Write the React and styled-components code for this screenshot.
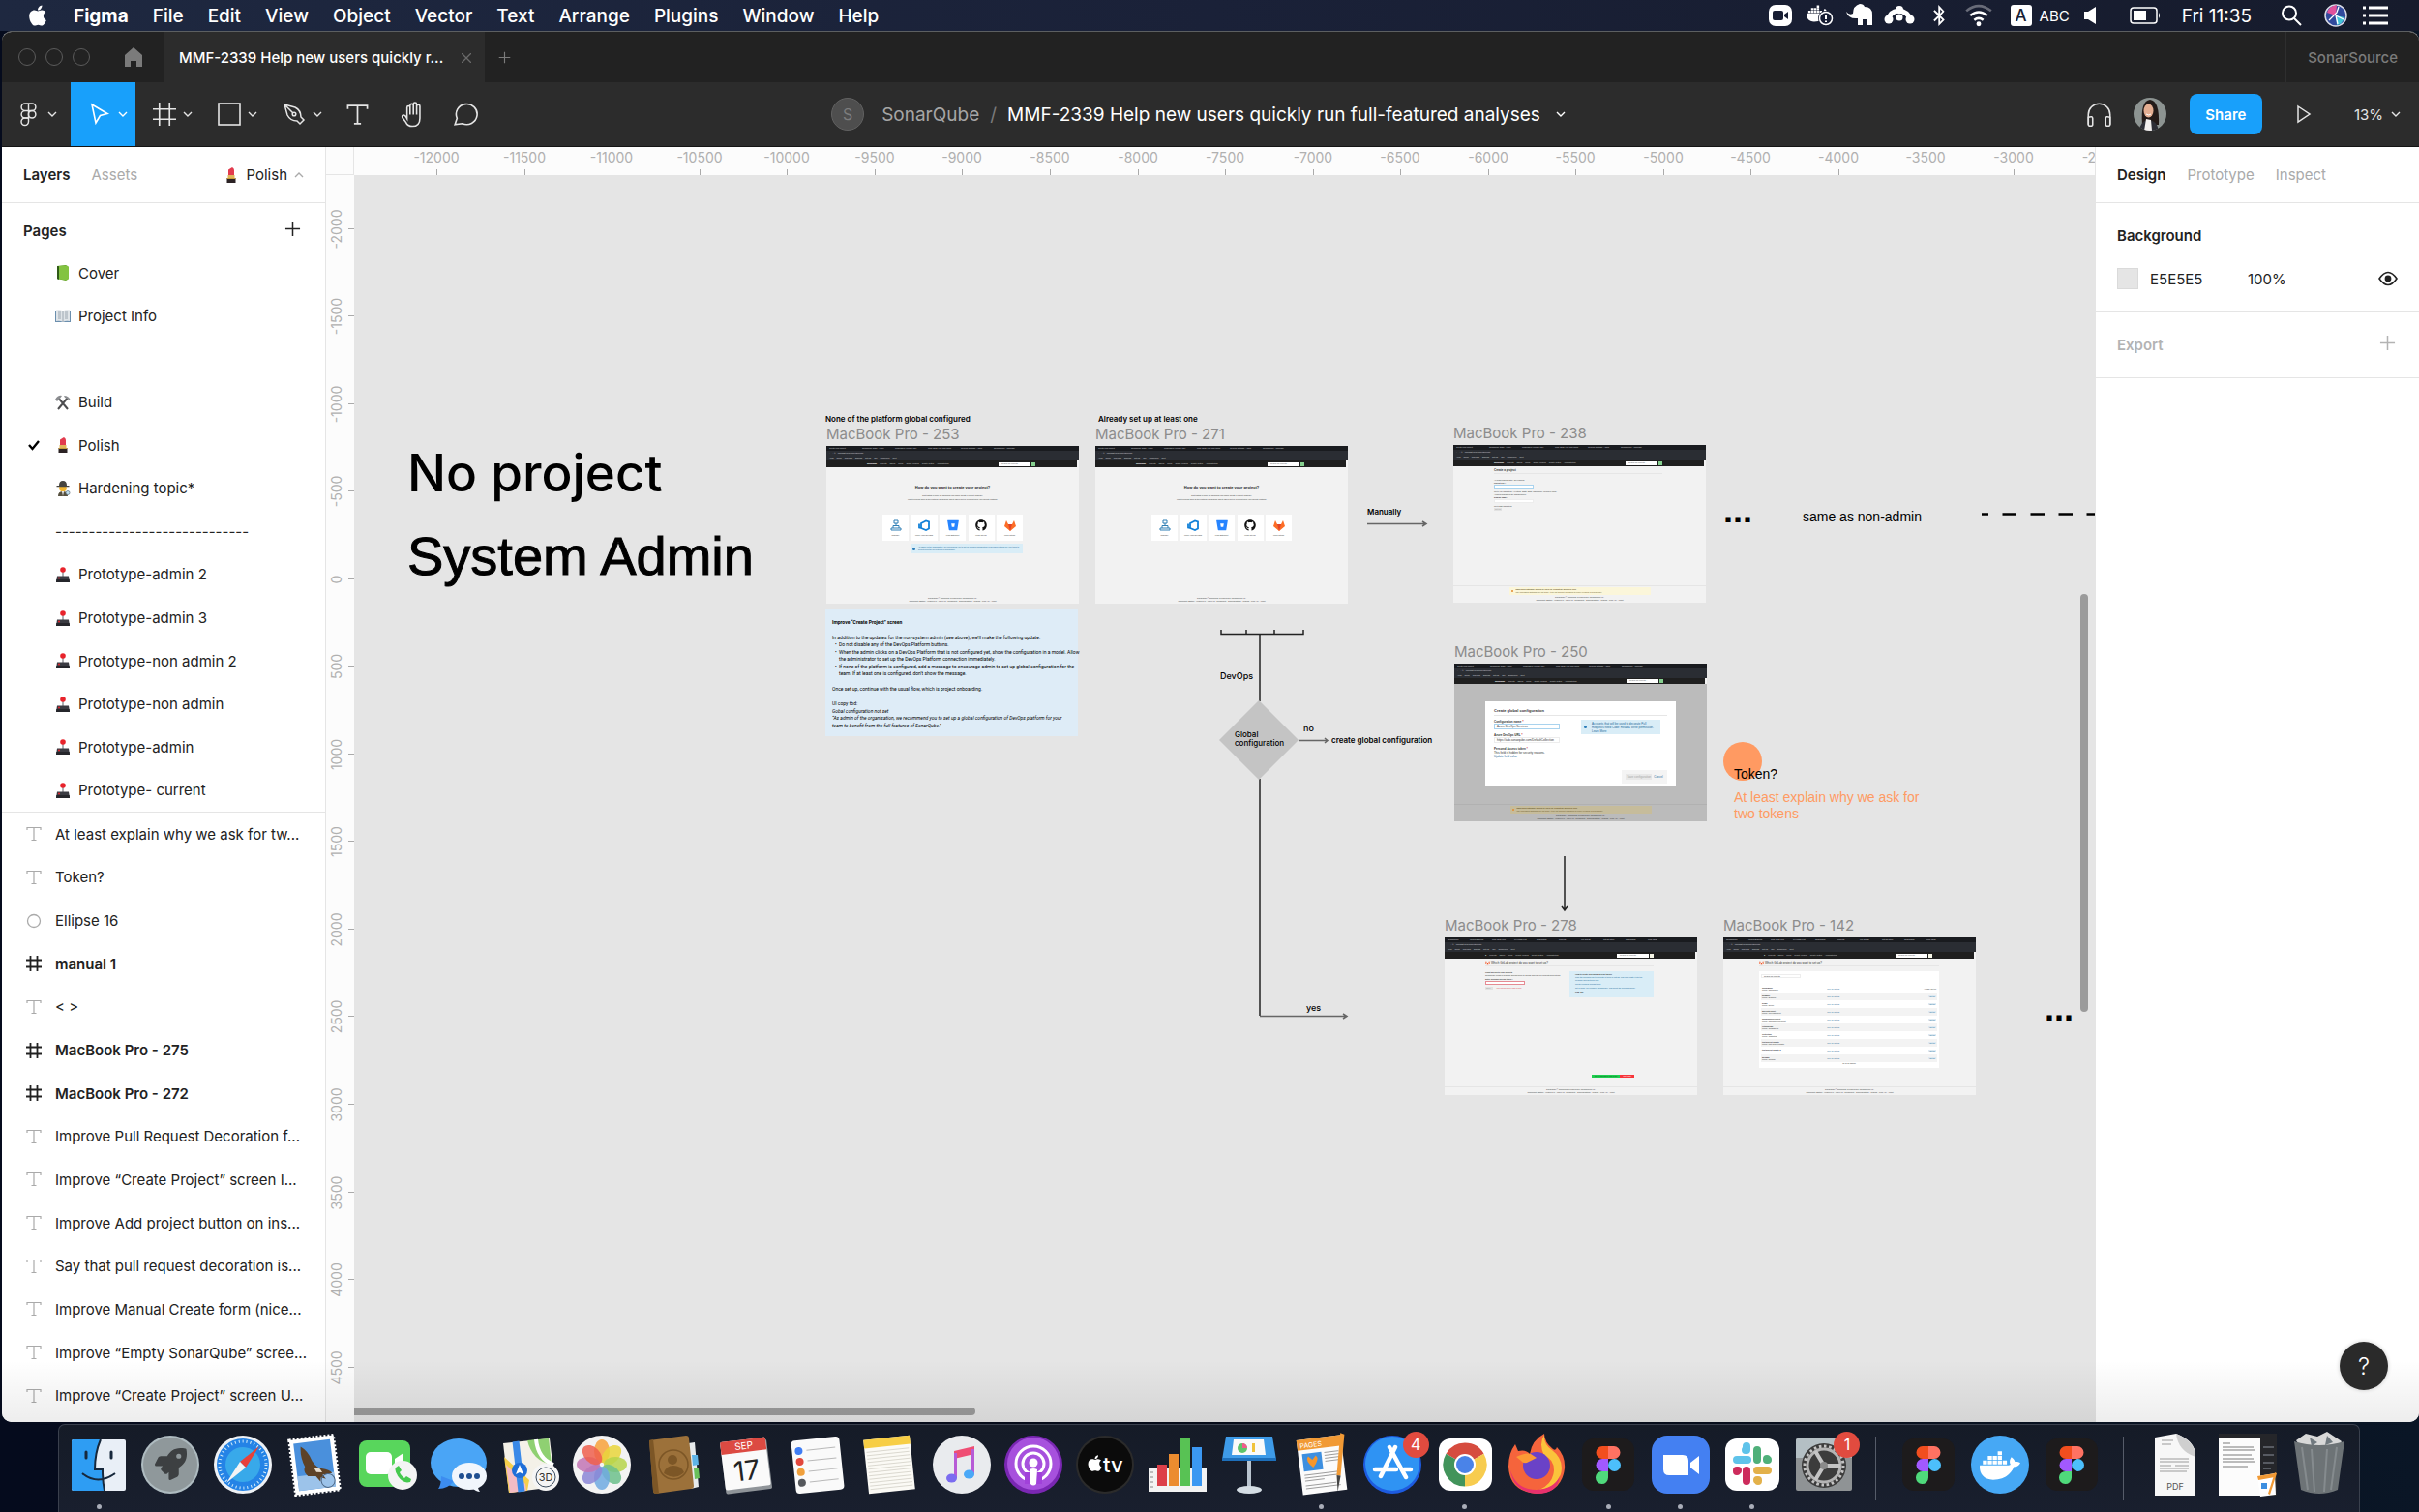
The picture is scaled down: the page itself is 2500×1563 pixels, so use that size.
import React from "react";
import styled, { createGlobalStyle, css } from "styled-components";
import { FaApple, FaBluetoothB, FaDocker, FaRocket, FaGithub, FaGitlab, FaBitbucket } from "react-icons/fa";

const GlobalStyle = createGlobalStyle`
    * { box-sizing: border-box; }
    body { margin: 0; background: #060b1b; }
    button, input { font: inherit; color: inherit; background: none; border: 0; padding: 0; margin: 0; }
    ul { list-style: none; margin: 0; padding: 0; }
    h2, h3, p { margin: 0; font-size: inherit; font-weight: inherit; }
`;

// pixels on screen for one canvas unit at the current zoom
const UNIT = 0.1811;
const ORIGIN_X = -12470;
const ORIGIN_Y = -2301;

const menus = ["File", "Edit", "View", "Object", "Vector", "Text", "Arrange", "Plugins", "Window", "Help"];

const pages = [
    { icon: "cover", name: "Cover" },
    { icon: "info", name: "Project Info" },
    { name: "" },
    { icon: "build", name: "Build" },
    { icon: "polish", name: "Polish", current: true },
    { icon: "detective", name: "Hardening topic*" },
    { name: "-----------------------------" },
    { icon: "joystick", name: "Prototype-admin 2" },
    { icon: "joystick", name: "Prototype-admin 3" },
    { icon: "joystick", name: "Prototype-non admin 2" },
    { icon: "joystick", name: "Prototype-non admin" },
    { icon: "joystick", name: "Prototype-admin" },
    { icon: "joystick", name: "Prototype- current" },
];

const layers = [
    { type: "text", name: "At least explain why we ask for tw..." },
    { type: "text", name: "Token?" },
    { type: "ellipse", name: "Ellipse 16" },
    { type: "frame", name: "manual 1" },
    { type: "text", name: "< >" },
    { type: "frame", name: "MacBook Pro - 275" },
    { type: "frame", name: "MacBook Pro - 272" },
    { type: "text", name: "Improve Pull Request Decoration f..." },
    { type: "text", name: "Improve “Create Project” screen I..." },
    { type: "text", name: "Improve Add project button on ins..." },
    { type: "text", name: "Say that pull request decoration is..." },
    { type: "text", name: "Improve Manual Create form (nice..." },
    { type: "text", name: "Improve “Empty SonarQube” scree..." },
    { type: "text", name: "Improve “Create Project” screen U..." },
];

/* ---------- small icons ---------- */

const Line = ({ size = 24, box = 24, width = 1.5, children }) => (
    <svg width={size} height={size} viewBox={`0 0 ${box} ${box}`} fill="none" stroke="currentColor" strokeWidth={width} aria-hidden="true">
        {children}
    </svg>
);

const Chevron = ({ up }) => (
    <Line size={10} box={10} width={1.4}>
        <path d={up ? "M1 7l4-4 4 4" : "M1 3l4 4 4-4"} />
    </Line>
);

const Plus = ({ size = 18 }) => (
    <Line size={size} box={18} width={1.6}>
        <path d="M9 1v16M1 9h16" />
    </Line>
);

const TextGlyph = ({ size = 16 }) => (
    <Line size={size} box={16} width={1.2}>
        <path d="M1 4V1.500h14V4M8 1.500v13M5.500 14.500h5" />
    </Line>
);

const FrameGlyph = ({ size = 16, width = 1.8 }) => (
    <Line size={size} box={16} width={width}>
        <path d="M4.500 0v16M11.500 0v16M0 4.500h16M0 11.500h16" />
    </Line>
);

const layerIcons = {
    text: <TextGlyph />,
    frame: <FrameGlyph />,
    ellipse: (
        <Line size={16} box={16} width={1.3}>
            <circle cx="8" cy="8" r="6.500" />
        </Line>
    ),
};

const pageIcons = {
    cover: (
        <>
            <path d="M2 1l9-1 3 2v12l-3 2-9-2z" fill="#5d9c22" />
            <path d="M4 1l8-.500 2 1.500v12l-2 1.500-8-1z" fill="#83c341" />
            <path d="M2 1l2 .300V15l-2-.800z" fill="#2f5a17" />
        </>
    ),
    info: (
        <>
            <path d="M0 2h16v12H0z" fill="#6b8fae" />
            <path d="M1 1.500q4-1 7 1 3-2 7-1V13q-4-1-7 1-3-2-7-1z" fill="#dfe4e8" />
            <path d="M8 2.500V14M3 4h3M3 6h3M3 8h3M3 10h3M10 4h3M10 6h3M10 8h3M10 10h3" stroke="#8c98a3" strokeWidth=".8" />
        </>
    ),
    build: (
        <>
            <path d="M3 3l10 12M13 3L3 15" stroke="#4e4e50" strokeWidth="2" />
            <path d="M0 5q3-5 7-4L4.500 4.500 2 7zM9 1q5 0 7 5l-2-1-4-2z" fill="#8b8d90" />
        </>
    ),
    polish: (
        <>
            <path d="M5 8V2.500L9 0q2 1 2 3v5z" fill="#e23b4e" />
            <path d="M4.500 8h7v3h-7z" fill="#e0b65a" />
            <path d="M3.500 11h9v5h-9z" fill="#2b2224" />
            <path d="M3.500 11h9v1h-9z" fill="#c89b3c" />
        </>
    ),
    detective: (
        <>
            <path d="M3 16q0-5 5-5t5 5z" fill="#56503f" />
            <circle cx="8" cy="7.500" r="3.800" fill="#f2b632" />
            <path d="M1.500 5h13v1.300h-13zM4 5q0-5 4-5t4 5z" fill="#46443f" />
            <path d="M7 11h2l-1 5z" fill="#f3f3f3" />
            <circle cx="13" cy="12.500" r="2" fill="#bfe0f2" stroke="#6b7a84" strokeWidth=".8" />
        </>
    ),
    joystick: (
        <>
            <path d="M7.300 4h1.400v6H7.300z" fill="#8d8f94" />
            <circle cx="8" cy="3" r="2.800" fill="#e8232b" />
            <path d="M2 9.500h12l1 6.500H1z" fill="#3a3b42" />
            <path d="M1.300 13h13.400l.300 3H1z" fill="#25262b" />
            <circle cx="4" cy="11.500" r="1" fill="#e8232b" />
        </>
    ),
};

const PageIcon = ({ name }) => (
    <svg width="16" height="16" viewBox="0 0 16 16" aria-hidden="true">
        {pageIcons[name]}
    </svg>
);

/* ---------- dock icons ---------- */

const FigmaMark = () => (
    <>
        <rect x="3" y="3" width="54" height="54" rx="12" fill="#1d1b1c" />
        <path d="M30 11h-6a6.500 6.500 0 0 0 0 13h6z" fill="#f24e1e" />
        <path d="M30 11h6a6.500 6.500 0 0 1 0 13h-6z" fill="#ff7262" />
        <path d="M30 24h-6a6.500 6.500 0 0 0 0 13h6z" fill="#a259ff" />
        <circle cx="36.500" cy="30.500" r="6.500" fill="#4cbffb" />
        <path d="M30 37h-6a6.500 6.500 0 1 0 6 6.500z" fill="#4fd97b" />
    </>
);

const times = (n, fn) => Array.from({ length: n }, (_, i) => fn(i));

const dockIcons = {
    finder: (
        <>
            <rect x="2" y="4" width="56" height="53" rx="2" fill="#e9eff7" />
            <path d="M32 4H4q-2 0-2 2v49q0 2 2 2h32q-2-9-2-21h-8q0-20 6-32z" fill="#2e9df3" />
            <path d="M17 17v6M43 17v6" stroke="#17283c" strokeWidth="3" strokeLinecap="round" />
            <path d="M13 39q16 13 34 0M32 4q-6 14-6 31h8q0 13 2 22" fill="none" stroke="#17283c" strokeWidth="2" />
        </>
    ),
    launchpad: (
        <>
            <circle cx="30" cy="30" r="30" fill="#aebbc0" />
            <circle cx="30" cy="30" r="28" fill="#8f989b" />
            <FaRocket x="14" y="13" size={33} color="#3d4042" />
        </>
    ),
    safari: (
        <>
            <circle cx="30" cy="30" r="30" fill="#eef1f4" />
            <circle cx="30" cy="30" r="27" fill="#2483e6" />
            <circle cx="30" cy="30" r="18" fill="#38a9ea" />
            <circle cx="30" cy="30" r="24" fill="none" stroke="#d3ecfb" strokeWidth="3" strokeDasharray="1 3" />
            <path d="M47 11L27 27l6 6z" fill="#e8403a" />
            <path d="M13 49l14-22 6 6z" fill="#f4f4f4" />
        </>
    ),
    mail: (
        <g transform="rotate(-7 30 30)">
            <rect x="7" y="2" width="46" height="57" fill="#fff" stroke="#fff" strokeWidth="3" strokeDasharray="2 2" />
            <rect x="11" y="6" width="38" height="49" fill="#4a90dc" />
            <path d="M11 40h38v15H11z" fill="#9cc3ea" />
            <path d="M18 10q7 5 10 16 4 8 9 9 8 2 10 6-5 1-10 0l3 5-5-2-1 4-4-6-8-1q-5-5-2-10-4-10-2-21z" fill="#5d4227" />
            <path d="M29 33l6 2 2 4-6-1z" fill="#e8ded0" />
            <circle cx="42" cy="48" r="7" fill="none" stroke="#4c6684" />
        </g>
    ),
    facetime: (
        <>
            <rect x="2" y="5" width="53" height="48" rx="8" fill="#58d65c" />
            <rect x="9" y="17" width="27" height="23" rx="5" fill="#fff" />
            <path d="M39 24l9-6v14l-9 5z" fill="#fff" />
            <circle cx="47" cy="41" r="15" fill="#f4f4f4" />
            <path d="M40 33q-2 3 3 10t12 5l1-3-5-3-2 2q-4-3-5-6l2-2-3-5z" fill="#45c94d" />
        </>
    ),
    messages: (
        <>
            <ellipse cx="30" cy="28" rx="29" ry="25" fill="#4aa5f6" />
            <path d="M12 42q0 9-3 13 10 0 16-8z" fill="#3c8cf0" />
            <ellipse cx="41" cy="42" rx="18" ry="14" fill="#f1f6fc" />
            <path d="M44 54q4 4 8 4-3-4-2-8z" fill="#f1f6fc" />
            <circle cx="33" cy="42" r="3" fill="#1f4f91" />
            <circle cx="41" cy="42" r="3" fill="#1f4f91" />
            <circle cx="49" cy="42" r="3" fill="#1f4f91" />
        </>
    ),
    maps: (
        <>
            <path d="M2 8l48-5 6 50-48 6z" fill="#f4f1e8" />
            <path d="M27 5l22-2 3 27q-20-4-25-25z" fill="#8fd072" />
            <path d="M3 22l26 24-2 11-19 2z" fill="#f6cf4a" />
            <path d="M5 30l20 20 1 7-17 2z" fill="#f4bcc5" />
            <path d="M15 6l6 52" stroke="#3a8ae8" strokeWidth="7" />
            <path d="M36 4q2 20 18 26" fill="none" stroke="#fff" strokeWidth="4" />
            <circle cx="19" cy="36" r="8" fill="#1f6fd8" />
            <path d="M19 30l4 10-4-2-4 2z" fill="#fff" />
            <circle cx="46" cy="43" r="14" fill="#f5f5f5" />
            <circle cx="46" cy="43" r="10" fill="none" stroke="#3a4a5c" />
            <text x="46" y="47" textAnchor="middle" fontFamily="Inter, sans-serif" fontSize="11" fill="#333">3D</text>
        </>
    ),
    photos: (
        <>
            <circle cx="30" cy="30" r="30" fill="#f3f3f3" />
            {["#f7a13b", "#e9d53b", "#b6d34a", "#6cc08b", "#6fa9e0", "#8b86d6", "#c274b4", "#ee5f4c"].map((c, i) => (
                <ellipse key={c} cx="30" cy="16" rx="8" ry="12" fill={c} opacity=".85" transform={`rotate(${i * 45} 30 30)`} />
            ))}
        </>
    ),
    contacts: (
        <>
            <path d="M44 8l7-1 4 46-8 2z" fill="#e7eaec" />
            <path d="M48 20l6 0 1 10-6 1z" fill="#5fb4e8" />
            <path d="M50 34l5 0 1 10-5 1z" fill="#69c05a" />
            <path d="M4 5L42 0q3 0 3 3l5 49q0 3-3 3l-36 5q-3 0-3-3z" fill="#9c713a" />
            <path d="M4 5l4-1 6 56-3 0q-3 0-3-3z" fill="#7c5626" />
            <circle cx="29" cy="30" r="15" fill="none" stroke="#7c5626" strokeWidth="1.500" />
            <circle cx="28" cy="25" r="5" fill="#7c5626" />
            <path d="M19 39q2-8 10-8t11 7q-9 9-21 1z" fill="#7c5626" />
        </>
    ),
    calendar: (
        <g transform="rotate(-7 30 30)">
            <rect x="6" y="6" width="48" height="52" rx="2" fill="#8f9499" />
            <rect x="6" y="4" width="47" height="50" rx="2" fill="#fafafa" />
            <path d="M8 4h43q2 0 2 2v11H6V6q0-2 2-2z" fill="#dc4a42" />
            <text x="30" y="14" textAnchor="middle" fontFamily="Inter, sans-serif" fontSize="10" fill="#fff">SEP</text>
            <text x="30" y="46" textAnchor="middle" fontFamily="Inter, sans-serif" fontSize="28" fill="#222">17</text>
        </g>
    ),
    reminders: (
        <g transform="rotate(-6 30 30)">
            <rect x="5" y="3" width="50" height="55" rx="4" fill="#fafafa" />
            {["#3f7df4", "#e2473c", "#f0a03c", "#55585c"].map((c, i) => (
                <g key={c}>
                    <circle cx="12" cy={14 + i * 11} r="4" fill={c} />
                    <path d={`M20 ${14 + i * 11}h30`} stroke="#b9b9b9" />
                </g>
            ))}
        </g>
    ),
    notes: (
        <g transform="rotate(-6 30 30)">
            <rect x="6" y="2" width="48" height="56" fill="#fbfaf5" />
            <rect x="6" y="2" width="48" height="9" fill="#f7ce45" />
            {times(12, (i) => (
                <path key={i} d={`M8 ${15 + i * 3.5}h44`} stroke="#d4d2c8" strokeWidth=".8" />
            ))}
        </g>
    ),
    music: (
        <>
            <circle cx="30" cy="30" r="30" fill="#e9ebee" />
            <path d="M22 16l21-5v8l-21 5z" fill="#ef4e74" />
            <path d="M23.500 18v26M41.500 14v26" stroke="#b75bd6" strokeWidth="3" />
            <ellipse cx="19.500" cy="44" rx="5.500" ry="4.500" fill="#7b6cf0" />
            <ellipse cx="37.500" cy="40" rx="5.500" ry="4.500" fill="#4aa8f7" />
        </>
    ),
    podcasts: (
        <>
            <circle cx="30" cy="30" r="30" fill="#7a27b3" />
            <circle cx="30" cy="29" r="27" fill="#a751dd" />
            <circle cx="30" cy="29" r="18" fill="none" stroke="#fff" strokeWidth="3" />
            <circle cx="30" cy="29" r="11" fill="none" stroke="#fff" strokeWidth="3" />
            <path d="M21 38h18v12H21z" fill="#a141da" />
            <circle cx="30" cy="28" r="4.500" fill="#fff" />
            <path d="M26 35q4-2 8 0l-1 15q-3 3-6 0z" fill="#fff" />
        </>
    ),
    tv: (
        <>
            <circle cx="30" cy="30" r="30" fill="#2b2b2b" />
            <circle cx="30" cy="30" r="28" fill="#0b0b0b" />
            <FaApple x="10" y="19" size={19} color="#fff" />
            <text x="28" y="38" fontFamily="Inter, sans-serif" fontSize="22" fontWeight="500" fill="#fff">tv</text>
        </>
    ),
    numbers: (
        <>
            <path d="M0 34h60v24H0z" fill="#f3f3f3" />
            <path d="M9 30h10v22H9z" fill="#dd3f49" />
            <path d="M21 19h10v33H21z" fill="#ec8c2f" />
            <path d="M33 3h10v49H33z" fill="#58c254" />
            <path d="M45 12h10v40H45z" fill="#3b98f2" />
            <path d="M2 38h3M2 43h3M2 48h3M2 53h3" stroke="#888" />
        </>
    ),
    keynote: (
        <>
            <path d="M28 26h4v30h-4z" fill="#b9c4cf" />
            <ellipse cx="30" cy="56" rx="13" ry="4" fill="#d4dde4" />
            <path d="M6 1h48l4 24H2z" fill="#3e9be8" />
            <path d="M2 23h56v3H2z" fill="#1d6fbb" />
            <path d="M14 4h31l2 16H12z" fill="#fafafa" />
            <circle cx="23" cy="13" r="5" fill="#5fc36a" />
            <path d="M23 8a5 5 0 0 1 5 5h-5z" fill="#f35b8b" />
            <path d="M33 8h3v9h-3z" fill="#f0c33c" />
        </>
    ),
    pages: (
        <g transform="rotate(-7 30 30)">
            <rect x="8" y="2" width="46" height="57" fill="#fbfbfb" />
            <rect x="8" y="2" width="46" height="11" fill="#f19a35" />
            <text x="11" y="11" fontFamily="Inter, sans-serif" fontSize="7" fill="#fff">PAGES</text>
            <rect x="12" y="17" width="20" height="18" fill="#3d8fe0" />
            <path d="M22 32q-8-8-4-12l4 4 4-4q4 4-4 12z" fill="#f7962c" />
            <path d="M35 18h15M35 21h15M35 24h15M35 27h15M12 39h36M12 42h36M12 45h20M12 50h32M12 53h36" stroke="#8a8a8a" strokeWidth=".8" />
            <path d="M54 0l4 2-9 42-4-1z" fill="#f19a35" />
            <path d="M45 43l4 1-5 16z" fill="#444" />
        </g>
    ),
    appstore: (
        <>
            <circle cx="30" cy="30" r="30" fill="#1d5be0" />
            <circle cx="30" cy="29" r="28" fill="#2f93f3" />
            <path d="M33 12L18 42M27 12l17 31M12 35h22M42 35h7" stroke="#fff" strokeWidth="4.500" strokeLinecap="round" />
        </>
    ),
    chrome: (
        <>
            <rect x="3" y="3" width="55" height="54" rx="12" fill="#fff" />
            <path d="M30 30L10.500 18.700a22.500 22.500 0 0 1 39 0z" fill="#d64c3f" />
            <path d="M30 30v22.500A22.500 22.500 0 0 1 10.500 18.700z" fill="#42945b" />
            <path d="M30 30l19.500-11.300A22.500 22.500 0 0 1 30 52.500z" fill="#f7cc4f" />
            <circle cx="30" cy="30" r="11" fill="#fff" />
            <circle cx="30" cy="30" r="9" fill="#4a83e8" />
        </>
    ),
    firefox: (
        <>
            <path d="M30 60Q2 58 1 32 1 18 8 9l3 7q8-2 12 3 2-14 15-21 0 9 9 16 3 2 4-2 9 9 8 22-3 25-29 26z" fill="#f5643c" />
            <path d="M38-1q-1 10 8 16 13 10 9 25-6 15-22 16 14-6 15-20 0-12-10-15-6-12 0-22z" fill="#fbc33b" />
            <circle cx="30" cy="31" r="14" fill="#6a42c7" />
            <path d="M9 22q10-5 15-3l6 4-8 4q-5 3-8-1z" fill="#fb9a35" />
            <path d="M3 36q6 20 27 20 18-1 24-14-2 18-24 18Q6 58 3 36z" fill="#e8316e" />
        </>
    ),
    figma: <FigmaMark />,
    zoom: (
        <>
            <rect width="60" height="60" rx="16" fill="#4480f2" />
            <path d="M12 20h20q6 0 6 6v15H18q-6 0-6-6z" fill="#fff" />
            <path d="M40 28l9-7v19l-9-7z" fill="#fff" />
        </>
    ),
    slack: (
        <>
            <rect x="2" y="3" width="56" height="54" rx="12" fill="#fff" />
            <path d="M24 15v-4M24 15h-1M14 25h11" stroke="#5fc3ea" strokeWidth="8" strokeLinecap="round" />
            <path d="M35 15v10M46 25h-1M45 25v-1" stroke="#4fb07a" strokeWidth="8" strokeLinecap="round" />
            <path d="M35 36h11M35 46h1M36 47v-1" stroke="#e3b14a" strokeWidth="8" strokeLinecap="round" />
            <path d="M24 36v11M14 36h1M14 36v1" stroke="#cd2b5c" strokeWidth="8" strokeLinecap="round" />
        </>
    ),
    settings: (
        <>
            <rect x="1" y="3" width="58" height="54" rx="2" fill="#8f9395" />
            <path d="M1 5q0-2 2-2h54q2 0 2 2v18H1z" fill="#b4bfc4" />
            <circle cx="30" cy="31" r="23" fill="#3c3c3c" />
            <circle cx="30" cy="31" r="20" fill="none" stroke="#c4c4c4" strokeWidth="3" strokeDasharray="2.600 2.600" />
            <circle cx="30" cy="31" r="17" fill="none" stroke="#b4b4b4" strokeWidth="3" />
            <path d="M30 31h17M30 31L21 16M30 31l-9 15" stroke="#c4c4c4" strokeWidth="4" />
            <circle cx="30" cy="31" r="4" fill="#8a8a8a" />
        </>
    ),
    docker: (
        <>
            <circle cx="30" cy="30" r="30" fill="#46a8f5" />
            <FaDocker x="9" y="10" size={42} color="#fff" />
        </>
    ),
    pdf: (
        <>
            <path d="M9 2l22-4q21 8 20 24v40H9z" fill="#f7f7f7" />
            <path d="M31-2q2 18 20 24 0-16-20-24z" fill="#cfcfcf" />
            <path d="M16 5h12M16 9h10M14 24h30M14 27h30M14 31h12M30 31h14M14 34h30M14 37h28" stroke="#9b9b9b" />
            <text x="30" y="56" textAnchor="middle" fontFamily="Inter, sans-serif" fontSize="9" fill="#555">PDF</text>
        </>
    ),
    doc: (
        <>
            <path d="M0-2h60v64H0z" fill="#fcfcfc" />
            <path d="M0-2h60v5H0zM43 3h17v59H43z" fill="#25262a" />
            <path d="M4 8h8M4 12h32M4 15h34M4 20h30M4 24h32M4 27h34M4 32h26" stroke="#7a7a7a" />
            <path d="M46 12h11M46 20h11M46 28h11M46 34h8" stroke="#8a8f9a" />
            <path d="M40 42l18-3 1 22-16 2z" fill="#fff" />
            <path d="M40 42l18-3v4l-17 3z" fill="#f19a35" />
            <path d="M44 49h6v6h-6z" fill="#3d8fe0" />
            <path d="M58 38l2 1-7 22-2-1z" fill="#f19a35" />
        </>
    ),
    trash: (
        <>
            <path d="M6 5l10-7 12 3 10-5 9 6 6 4-5 8H12z" fill="#d8d8d8" />
            <path d="M20 2l8 5-6 4zM38 0l6 7-8 3z" fill="#70797f" />
            <path d="M4 6q26 8 52 0l-7 50q-19 8-38 0z" fill="#6d7376" />
            <path d="M12 12l6 44M22 14l3 44M38 14l-3 44M48 12l-6 44" stroke="#858b8e" strokeWidth="2" />
        </>
    ),
};

const dockGroups = [
    [
        { icon: "finder", label: "Finder", running: true },
        { icon: "launchpad", label: "Launchpad" },
        { icon: "safari", label: "Safari" },
        { icon: "mail", label: "Mail" },
        { icon: "facetime", label: "FaceTime" },
        { icon: "messages", label: "Messages" },
        { icon: "maps", label: "Maps" },
        { icon: "photos", label: "Photos" },
        { icon: "contacts", label: "Contacts" },
        { icon: "calendar", label: "Calendar" },
        { icon: "reminders", label: "Reminders" },
        { icon: "notes", label: "Notes" },
        { icon: "music", label: "Music" },
        { icon: "podcasts", label: "Podcasts" },
        { icon: "tv", label: "TV" },
        { icon: "numbers", label: "Numbers" },
        { icon: "keynote", label: "Keynote" },
        { icon: "pages", label: "Pages", running: true },
        { icon: "appstore", label: "App Store", badge: 4 },
        { icon: "chrome", label: "Chrome", running: true },
        { icon: "firefox", label: "Firefox" },
        { icon: "figma", label: "Figma", running: true },
        { icon: "zoom", label: "Zoom", running: true },
        { icon: "slack", label: "Slack", running: true },
        { icon: "settings", label: "System Preferences", badge: 1 },
    ],
    [
        { icon: "figma", label: "Figma" },
        { icon: "docker", label: "Docker" },
        { icon: "figma", label: "Figma" },
    ],
    [
        { icon: "pdf", label: "Documents" },
        { icon: "doc", label: "Screenshots" },
        { icon: "trash", label: "Trash" },
    ],
];

/* ---------- macOS menu bar ---------- */

function SystemMenu() {
    return (
        <MenuBar>
            <MenuGroup>
                <AppleButton aria-label="Apple">
                    <FaApple size={24} />
                </AppleButton>
                <MenuItem $bold>Figma</MenuItem>
                {menus.map((name) => (
                    <MenuItem key={name}>{name}</MenuItem>
                ))}
            </MenuGroup>
            <StatusGroup>
                <StatusSlot aria-label="Zoom">
                    <svg width="24" height="22" viewBox="0 0 24 22">
                        <rect width="24" height="22" rx="7" fill="#fff" />
                        <rect x="4" y="6" width="11" height="10" rx="2" fill="#171d33" />
                        <path d="M16 10l4-3v8l-4-3z" fill="#171d33" />
                    </svg>
                </StatusSlot>
                <StatusSlot aria-label="Docker">
                    <svg width="28" height="24" viewBox="0 0 28 24">
                        <FaDocker size={24} y="-2" color="#fff" />
                        <circle cx="20" cy="15" r="8" fill="#171d33" />
                        <circle cx="20" cy="15" r="6.500" fill="none" stroke="#fff" strokeWidth="1.500" />
                        <path d="M20 11v5M20 17.500v1.500" stroke="#fff" strokeWidth="2" />
                    </svg>
                </StatusSlot>
                <StatusSlot aria-label="Evernote">
                    <svg width="30" height="24" viewBox="0 0 30 24" fill="#fff">
                        <path d="M1 8q3 4 7 2 0-8 7-10 4 0 5 3 8 0 8 8v11h-5v-6h-5v6h-5v-7Q3 16 1 8z" />
                    </svg>
                </StatusSlot>
                <StatusSlot aria-label="Connections">
                    <svg width="32" height="20" viewBox="0 0 32 20">
                        <path d="M5 14q1-8 10-9 10 1 12 9" fill="none" stroke="#fff" strokeWidth="5" />
                        <circle cx="5" cy="14" r="4.500" fill="#fff" />
                        <circle cx="27" cy="14" r="4.500" fill="#fff" />
                        <circle cx="16" cy="4" r="4" fill="#fff" />
                        <circle cx="16" cy="12" r="3.500" fill="#fff" />
                    </svg>
                </StatusSlot>
                <StatusSlot aria-label="Bluetooth">
                    <FaBluetoothB size={22} />
                </StatusSlot>
                <StatusSlot aria-label="Wi-Fi">
                    <Line size={28} width={2.2}>
                        <path d="M1 8q11-9 22 0" opacity=".35" />
                        <path d="M4.500 12q7.500-6 15 0M8 16q4-3 8 0" />
                        <circle cx="12" cy="19.500" r="1" fill="currentColor" />
                    </Line>
                </StatusSlot>
                <InputSource>
                    <b>A</b>
                    <span>ABC</span>
                </InputSource>
                <Speaker width="16" height="20" viewBox="0 0 16 20" fill="#fff">
                    <path d="M1 6h4l8-5v18l-8-5H1z" />
                </Speaker>
                <svg width="32" height="20" viewBox="0 0 32 20">
                    <rect x="1" y="2" width="27" height="16" rx="3" fill="none" stroke="#fff" strokeWidth="1.500" />
                    <rect x="4" y="5" width="13" height="10" fill="#fff" />
                    <path d="M30 7q2 3 0 6z" fill="#fff" />
                </svg>
                <time>Fri 11:35</time>
                <Line size={24} width={2}>
                    <circle cx="10" cy="9.500" r="7" />
                    <path d="M15 15l7 7" />
                </Line>
                <Siri width="24" height="24" viewBox="0 0 24 24">
                    <circle cx="12" cy="12" r="11" fill="#314a9c" stroke="#d9dbe6" strokeWidth="1.500" />
                    <path d="M12 12L3 9q2-7 10-8z" fill="#e0529c" />
                    <path d="M12 12l9 2q-2 7-8 8z" fill="#43c6d8" />
                    <path d="M5 17l8-8 2-6M12 12l2 9M12 12l8 4" fill="none" stroke="#fff" strokeWidth="1.300" />
                </Siri>
                <Line size={26} box={26} width={3}>
                    <path d="M6 5h20M6 13h20M6 21h20M0 5h3M0 13h3M0 21h3" />
                </Line>
            </StatusGroup>
        </MenuBar>
    );
}

/* ---------- Figma tab bar and toolbar ---------- */

function TabBar() {
    return (
        <Tabs>
            <TrafficLights>
                <button aria-label="Close" />
                <button aria-label="Minimise" />
                <button aria-label="Zoom" />
            </TrafficLights>
            <HomeButton aria-label="Home">
                <svg width="18" height="20" viewBox="0 0 18 20" fill="currentColor">
                    <path d="M0 8l9-8 9 8v12h-6v-6H6v6H0z" />
                </svg>
            </HomeButton>
            <FileTab>
                <span>MMF-2339 Help new users quickly r...</span>
                <button aria-label="Close tab">
                    <Line size={10} box={10} width={1.3}>
                        <path d="M0 0l10 10M10 0L0 10" />
                    </Line>
                </button>
            </FileTab>
            <NewTab aria-label="New tab">
                <Plus size={13} />
            </NewTab>
            <Team>SonarSource</Team>
        </Tabs>
    );
}

function Toolbar() {
    return (
        <Tools>
            <ToolGroup>
                <Tool $width={71} aria-label="Menu">
                    <Line size={25} box={24} width={1.4}>
                        <path d="M12 1H8.500a3.600 3.600 0 0 0 0 7.200H12zM12 1h3.500a3.600 3.600 0 0 1 0 7.200H12zM12 8.200H8.500a3.600 3.600 0 0 0 0 7.200H12z" />
                        <circle cx="15.500" cy="11.800" r="3.600" />
                        <path d="M12 15.400H8.500a3.600 3.600 0 1 0 3.500 3.600z" />
                    </Line>
                    <Chevron />
                </Tool>
                <Tool $width={67} $menu $active aria-label="Move">
                    <Line size={24} width={1.6}>
                        <path d="M4 2l16 9.500-7.500 2L8 21z" />
                    </Line>
                    <Chevron />
                </Tool>
                <Tool $width={67} $menu aria-label="Frame">
                    <FrameGlyph size={24} width={1.1} />
                    <Chevron />
                </Tool>
                <Tool $width={67} $menu aria-label="Rectangle">
                    <Line size={24} width={1.6}>
                        <rect x="1" y="1" width="22" height="22" />
                    </Line>
                    <Chevron />
                </Tool>
                <Tool $width={67} $menu aria-label="Pen">
                    <Line size={24}>
                        <path d="M2 2l11 3q6 3 6 10l3 3-4 4-3-3q-7 0-10-6zM2 2l9 9" />
                        <circle cx="12" cy="12" r="1.800" />
                    </Line>
                    <Chevron />
                </Tool>
                <Tool $width={56} aria-label="Text">
                    <TextGlyph size={23} />
                </Tool>
                <Tool $width={56} aria-label="Hand">
                    <Line size={29} width={1.3}>
                        <path d="M5 14V6q0-1.400 1.300-1.400T7.600 6v6V4.200q0-1.400 1.400-1.400t1.400 1.400V12V3q0-1.400 1.400-1.400T13.200 3v9V4.800q0-1.400 1.400-1.400T16 4.800V15q0 7-6.500 7-4 0-5.500-3.500L1 14.500q-.500-1.600.800-2.100 1.200-.200 2 1L5 15.500z" transform="translate(3 0)" />
                    </Line>
                </Tool>
                <Tool $width={56} aria-label="Comment">
                    <Line size={26} width={1.5}>
                        <path d="M2 22l2-6A10 9.800 0 1 1 9 21z" />
                    </Line>
                </Tool>
            </ToolGroup>
            <FileTitle>
                <ProjectInitial>S</ProjectInitial>
                <ProjectLink href="#project">SonarQube</ProjectLink>
                <Slash>/</Slash>
                <FileName>
                    MMF-2339 Help new users quickly run full-featured analyses
                    <Chevron />
                </FileName>
            </FileTitle>
            <ShareGroup>
                <IconButton aria-label="Start audio">
                    <Line size={27} width={1.4}>
                        <path d="M2 21V12a10 10 0 0 1 20 0v9" />
                        <path d="M2 14.500q4-1.500 4 1V21q0 1.500-2 1.500T2 21zM22 14.500q-4-1.500-4 1V21q0 1.500 2 1.500t2-1.500z" />
                    </Line>
                </IconButton>
                <IconButton aria-label="Profile">
                    <svg width="34" height="34" viewBox="0 0 34 34">
                        <clipPath id="face">
                            <circle cx="17" cy="17" r="17" />
                        </clipPath>
                        <g clipPath="url(#face)">
                            <path d="M0 0h34v34H0z" fill="#8d9492" />
                            <path d="M9 28q-2-25 8-26 10 1 9 26z" fill="#231a18" />
                            <ellipse cx="15.500" cy="13.500" rx="5" ry="7" fill="#e4ae92" />
                            <path d="M6 34q1-10 9-11 9 0 11 11z" fill="#2d2e36" />
                            <path d="M11 34l2-12 5 1 1 11z" fill="#f2efee" />
                            <path d="M13 17q3 2 5 0" stroke="#fff" fill="none" />
                        </g>
                    </svg>
                </IconButton>
                <ShareButton>Share</ShareButton>
                <IconButton aria-label="Present">
                    <Line size={20} box={20} width={1.5}>
                        <path d="M4 2l12 8-12 8z" />
                    </Line>
                </IconButton>
                <ZoomButton>
                    13%
                    <Chevron />
                </ZoomButton>
            </ShareGroup>
        </Tools>
    );
}

/* ---------- side panels ---------- */

function LeftPanel() {
    return (
        <SidePanel as="nav" $side="left">
            <PanelTabs>
                <PanelTab $active>Layers</PanelTab>
                <PanelTab>Assets</PanelTab>
                <PagePicker>
                    <PageIcon name="polish" />
                    Polish
                    <Chevron up />
                </PagePicker>
            </PanelTabs>
            <PagesHeader>
                <h2>Pages</h2>
                <button aria-label="Add page">
                    <Plus size={17} />
                </button>
            </PagesHeader>
            <PageList>
                {pages.map((page, i) => (
                    <li key={i}>
                        {page.name && (
                            <PageRow>
                                <Tick>
                                    {page.current && (
                                        <Line size={12} box={12} width={2.4}>
                                            <path d="M1 6l3.500 4L11 2" />
                                        </Line>
                                    )}
                                </Tick>
                                {page.icon && <PageIcon name={page.icon} />}
                                {page.name}
                            </PageRow>
                        )}
                    </li>
                ))}
            </PageList>
            <LayerList>
                {layers.map((layer, i) => (
                    <li key={i}>
                        <LayerRow $frame={layer.type === "frame"}>
                            {layerIcons[layer.type]}
                            <span>{layer.name}</span>
                        </LayerRow>
                    </li>
                ))}
            </LayerList>
        </SidePanel>
    );
}

function RightPanel() {
    return (
        <SidePanel $side="right">
            <PanelTabs>
                <PanelTab $active>Design</PanelTab>
                <PanelTab>Prototype</PanelTab>
                <PanelTab>Inspect</PanelTab>
            </PanelTabs>
            <Section>
                <SectionTitle>Background</SectionTitle>
                <FillRow>
                    <Swatch aria-label="Background colour" />
                    <HexInput aria-label="Hex value" defaultValue="E5E5E5" />
                    <HexInput aria-label="Opacity" defaultValue="100%" />
                    <EyeButton aria-label="Toggle visibility">
                        <Line size={20} box={20} width={1.6}>
                            <path d="M1 10q9-13 18 0-9 13-18 0z" />
                            <circle cx="10" cy="10" r="2.600" fill="currentColor" />
                        </Line>
                    </EyeButton>
                </FillRow>
            </Section>
            <ExportSection>
                <SectionTitle>Export</SectionTitle>
                <button aria-label="Add export">
                    <Plus size={17} />
                </button>
            </ExportSection>
        </SidePanel>
    );
}

/* ---------- frames on the canvas ---------- */

const projectTabs = ["Create new project", "SonarCube Team - Home", "Progress by release (Q1)", "MMF-2339 Help new users", "General Settings - Admin", "SonarSource - Calendar"];
const gitlabTabs = ["SonarSource", "Launch Backlog", "MMF-2339 Rea", "UI Leads Feat", "Onboarding", "Projects", "Full GitLab", "GitLab setup", "Onboarding", "MMF-2339"];

function Browser({ title, tabs = projectTabs, dim, children, notice, rule, minimal }) {
    return (
        <FrameNode>
            <h3>{title}</h3>
            <Screen>
                <Chrome>
                    <ChromeRow $dark $wide={!minimal}>
                        {tabs.map((tab, i) => (
                            <span key={i}>{tab}</span>
                        ))}
                    </ChromeRow>
                    <ChromeRow>← → ⟳ &nbsp; localhost:9000/projects/create</ChromeRow>
                    <ChromeRow>
                        <span>Apps</span>
                        <span>Gmail</span>
                        <span>Calendar</span>
                        <span>Discuss</span>
                        <span>GitHub</span>
                        <span>Jira</span>
                        <span>Confluence</span>
                        <span>Next</span>
                    </ChromeRow>
                </Chrome>
                <SonarNav>
                    <b>{minimal ? "●" : "sonarqube"}</b>
                    <span>Projects</span>
                    <span>Issues</span>
                    <span>Rules</span>
                    <span>Quality Profiles</span>
                    <span>Quality Gates</span>
                    <span>Administration</span>
                    <NavSearch>Search for projects...</NavSearch>
                    <NavPlus $plain={minimal} />
                </SonarNav>
                <ScreenBody $dim={dim}>
                    {children}
                    <ScreenFooter $rule={rule || notice}>
                        {notice && (
                            <Warning $dim={dim}>
                                <i />
                                <p>
                                    <b>Embedded database should be used for evaluation purposes only</b>
                                    <br />
                                    The embedded database will not scale, it will not support upgrading to newer versions of SonarQube.
                                </p>
                            </Warning>
                        )}
                        <p>SonarQube™ technology is powered by SonarSource SA</p>
                        <p>Community Edition - Version 8.9 - LGPL v3 - Community - Documentation - Plugins - Web API - About</p>
                    </ScreenFooter>
                </ScreenBody>
            </Screen>
        </FrameNode>
    );
}

const providers = [
    {
        name: "Manually",
        icon: (
            <svg width="12" height="12" viewBox="0 0 12 12" fill="none" stroke="#2f7fb5">
                <path d="M4 1h4v3H4zM1 9h10v2H1zM6 4v3M3 9V6.500h6V9" />
            </svg>
        ),
    },
    {
        name: "From Azure DevOps",
        icon: (
            <svg width="12" height="12" viewBox="0 0 12 12" fill="none" stroke="#1080d8" strokeWidth="1.800">
                <path d="M1 4.500v4l2 .500M3 9V4l5-2.500 3 1v7L8 11 3 9" />
            </svg>
        ),
    },
    { name: "From Bitbucket", icon: <FaBitbucket size={12} color="#2684ff" /> },
    { name: "From GitHub", icon: <FaGithub size={12} color="#111" /> },
    {
        name: "From GitLab",
        icon: (
            <svg width="12" height="12" viewBox="0 0 12 12">
                <path d="M0 7l2-6 2 4h4l2-4 2 6-6 5z" fill="#fc6d26" />
                <path d="M4 5h4l-2 7z" fill="#e24329" />
            </svg>
        ),
    },
];

const CreateProject = ({ info }) => (
    <CreateBody>
        <b>How do you want to create your project?</b>
        <p>
            Just testing or have an advanced use case? Create a project manually.
            <br />
            Want to benefit from all the features SonarQube has to offer? Set up a project from your favorite platform.
        </p>
        <Providers>
            {providers.map((p) => (
                <li key={p.name}>
                    {p.icon}
                    <span>{p.name}</span>
                </li>
            ))}
        </Providers>
        {info && (
            <InfoStrip>
                <i />
                <span>
                    As admin of the organisation, we recommend you to set up a global configuration of DevOps platform for your team to benefit
                    from the full features of SonarQube.
                </span>
            </InfoStrip>
        )}
    </CreateBody>
);

const ManualForm = () => (
    <FormBody>
        <FormTitle>Create a project</FormTitle>
        <p>All fields marked with * are required</p>
        <b>Project key *</b>
        <Field $focus />
        <p>
            Up to 400 characters. All letters, digits, dash, underscore, period or colon.
            <br />
            Allowed characters are alphanumeric.
        </p>
        <b>Display name *</b>
        <Field />
        <p>Up to 255 characters</p>
        <MiniButton>Set Up</MiniButton>
    </FormBody>
);

const ConfigModal = () => (
    <Modal>
        <FormTitle>Create global configuration</FormTitle>
        <ModalColumns>
            <ModalForm>
                <b>
                    Configuration name <em>*</em>
                </b>
                <Field $focus $large>
                    Azure DevOps Services
                </Field>
                <b>
                    Azure DevOps URL <em>*</em>
                </b>
                <Field $large>https://ado.sonarqube.com/DefaultCollection</Field>
                <b>
                    Personal Access token <em>*</em>
                </b>
                <span>This field is hidden for security reasons.</span>
                <u>Update field value</u>
            </ModalForm>
            <ModalInfo>
                <i />
                <span>
                    Accounts that will be used to decorate Pull Requests need Code: Read &amp; Write permission. <u>Learn More</u>
                </span>
            </ModalInfo>
        </ModalColumns>
        <ModalActions>
            <span>Save configuration</span>
            <u>Cancel</u>
        </ModalActions>
    </Modal>
);

const GitlabToken = () => (
    <FormBody>
        <FormTitle $plain>
            <FaGitlab size={5} color="#f4511e" /> Which GitLab project do you want to set up?
        </FormTitle>
        <TokenColumns>
            <div>
                <b>Grant access to your projects</b>
                <p>SonarQube needs a personal access token to access and list your projects from GitLab.</p>
                <b>Enter personal access token *</b>
                <Field $error />
                <TokenError>
                    <MiniButton>Save</MiniButton>
                    Your GitLab token was invalid
                </TokenError>
            </div>
            <TokenHelp>
                <b>How to create a personal access token?</b>
                <p>Click the following link to generate a token in GitLab, and copy-paste it into the personal access token field.</p>
                <p>
                    <u>Create personal access token</u>
                </p>
                <p>Set a name, for example “SonarQube”, and select the following scope:</p>
                <b>read_api</b>
            </TokenHelp>
        </TokenColumns>
        <Prompt>
            <span>To be discussed with team</span>
            <span>Not ready</span>
        </Prompt>
    </FormBody>
);

const repos = ["SonarQube", "Example", "Demo", "MyFirstProject", "SonarSourceProject", "GitlabDemo", "TestGitlab", "test project update", "test project update 2", "webapp"];

const GitlabProjects = () => (
    <ReposBody>
        <FormTitle $plain>
            <FaGitlab size={5} color="#f4511e" /> Which GitLab project do you want to set up?
        </FormTitle>
        <RepoPanel>
            <Field>Search for projects</Field>
            <table>
                <tbody>
                    {repos.map((repo, i) => (
                        <tr key={repo}>
                            <td>
                                <b>{repo}</b>
                                <br />
                                Meng / {repo}
                            </td>
                            <td>
                                <u>See on GitLab</u>
                            </td>
                            <td>{i === 0 ? "Already set up" : <MiniButton $blue>Set up</MiniButton>}</td>
                        </tr>
                    ))}
                </tbody>
            </table>
            <p>10 of 10 shown</p>
        </RepoPanel>
    </ReposBody>
);

function Ruler({ vertical }) {
    const from = vertical ? -2000 : -12000;
    const origin = vertical ? ORIGIN_Y : ORIGIN_X;
    return (
        <RulerBar $vertical={vertical}>
            {times(vertical ? 14 : 20, (i) => from + i * 500).map((value) => (
                <RulerMark key={value} $vertical={vertical} style={{ [vertical ? "top" : "left"]: Math.round((value - origin) * UNIT) }}>
                    <span>{value}</span>
                </RulerMark>
            ))}
        </RulerBar>
    );
}

const Flow = () => (
    <FlowLines width="1800" height="900" viewBox="0 0 1800 900" fill="none" stroke="#222" strokeWidth="1.500">
        <path d="M896 470v4.500h85V470M922 470v4M951 470v4M936 474v70M936 624v245" />
        <path d="M935 543l41 41-41 41-41-41z" fill="#c4c4c4" stroke="none" />
        <g stroke="#666">
            <path d="M936 869.500h89M1022 867l4 2.500-4 2.500M976 584.500h30M1003 582l3 2.500-3 2.500M1047 360.500h60M1104 358l4 2.500-4 2.500" />
        </g>
        <path d="M1251 704v56M1248 756l3 4 3-4" />
        <path d="M1682 350.500h118" stroke="#000" strokeWidth="2.500" strokeDasharray="14.500 14.500" strokeDashoffset="7.500" />
    </FlowLines>
);

function CanvasArea() {
    return (
        <CanvasGrid>
            <Corner />
            <Ruler />
            <Ruler vertical />
            <Canvas>
                <Flow />
                <Node $x={55} $y={266}>
                    <Headline>
                        No project
                        <br />
                        <b>System Admin</b>
                    </Headline>
                </Node>
                <Node $x={487} $y={246}>
                    <Note>None of the platform global configured</Note>
                </Node>
                <Node $x={769} $y={246}>
                    <Note>Already set up at least one</Note>
                </Node>
                <Node $x={488} $y={256}>
                    <Browser title="MacBook Pro - 253">
                        <CreateProject info />
                    </Browser>
                </Node>
                <Node $x={766} $y={256}>
                    <Browser title="MacBook Pro - 271">
                        <CreateProject />
                    </Browser>
                </Node>
                <Node $x={1136} $y={255}>
                    <Browser title="MacBook Pro - 238" notice>
                        <ManualForm />
                    </Browser>
                </Node>
                <Node $x={1137} $y={481}>
                    <Browser title="MacBook Pro - 250" dim notice>
                        <ConfigModal />
                    </Browser>
                </Node>
                <Node $x={1127} $y={764}>
                    <Browser title="MacBook Pro - 278" tabs={gitlabTabs} minimal rule>
                        <GitlabToken />
                    </Browser>
                </Node>
                <Node $x={1415} $y={764}>
                    <Browser title="MacBook Pro - 142" tabs={gitlabTabs} minimal rule>
                        <GitlabProjects />
                    </Browser>
                </Node>
                <Node $x={487} $y={449}>
                    <SpecCard>
                        <b>Improve “Create Project” screen</b>
                        <p>In addition to the updates for the non-system admin (see above), we’ll make the following update:</p>
                        <ul>
                            <li>Do not disable any of the DevOps Platform buttons.</li>
                            <li>
                                When the admin clicks on a DevOps Platform that is not configured yet, show the configuration in a model. Allow
                                <br />
                                the administrator to set up the DevOps Platform connection immediately.
                            </li>
                            <li>
                                If none of the platform is configured, add a message to encourage admin to set up global configuration for the
                                <br />
                                team. If at least one is configured, don’t show the message.
                            </li>
                        </ul>
                        <p>Once set up, continue with the usual flow, which is project onboarding.</p>
                        <p>
                            UI copy tbd:
                            <br />
                            <i>
                                Gobal configuration not set
                                <br />
                                “As admin of the organisation, we recommend you to set up a global configuration of DevOps platform for your
                                <br />
                                team to benefit from the full features of SonarQube.”
                            </i>
                        </p>
                    </SpecCard>
                </Node>
                <Node $x={1047} $y={342}>
                    <Note>Manually</Note>
                </Node>
                <Node $x={895} $y={512}>
                    <Note $large>DevOps</Note>
                </Node>
                <Node $x={910} $y={574}>
                    <Note $tight>
                        Global
                        <br />
                        configuration
                    </Note>
                </Node>
                <Node $x={981} $y={566}>
                    <Note $large>no</Note>
                </Node>
                <Node $x={1010} $y={578}>
                    <Note>create global configuration</Note>
                </Node>
                <Node $x={984} $y={855}>
                    <Note $large>yes</Note>
                </Node>
                <Node $x={1415} $y={329}>
                    <Dots>...</Dots>
                </Node>
                <Node $x={1747} $y={844}>
                    <Dots>...</Dots>
                </Node>
                <Node $x={1415} $y={586}>
                    <Ellipse />
                </Node>
                <Node $x={1497} $y={345}>
                    <Comment>same as non-admin</Comment>
                </Node>
                <Node $x={1426} $y={611}>
                    <Comment>Token?</Comment>
                </Node>
                <Node $x={1426} $y={635}>
                    <Comment $orange>
                        At least explain why we ask for
                        <br />
                        two tokens
                    </Comment>
                </Node>
                <ScrollThumbY />
                <ScrollThumbX />
            </Canvas>
        </CanvasGrid>
    );
}

/* ---------- dock ---------- */

function DockBar() {
    return (
        <Dock>
            {dockGroups.map((group, g) => (
                <React.Fragment key={g}>
                    {g > 0 && <DockDivider />}
                    {group.map((app, i) => (
                        <DockItem key={i} aria-label={app.label}>
                            <svg width="60" height="60" viewBox="0 0 60 60" overflow="visible">
                                {dockIcons[app.icon]}
                            </svg>
                            {app.badge && <Badge>{app.badge}</Badge>}
                            {app.running && <RunningDot />}
                        </DockItem>
                    ))}
                </React.Fragment>
            ))}
        </Dock>
    );
}

function App() {
    return (
        <Desktop>
            <GlobalStyle />
            <SystemMenu />
            <AppWindow>
                <TabBar />
                <Toolbar />
                <Workspace>
                    <LeftPanel />
                    <CanvasArea />
                    <RightPanel />
                </Workspace>
                <BottomShade />
                <HelpButton aria-label="Help">?</HelpButton>
            </AppWindow>
            <DockBar />
        </Desktop>
    );
}

const flexCenter = css`
    display: flex;
    align-items: center;
`;

const Desktop = styled.div`
    display: flex;
    flex-direction: column;
    height: 100vh;
    overflow: hidden;
    background: linear-gradient(90deg, #050b1d, #060b18 60%, #0a1626);
    font-family: Inter, "Liberation Sans", sans-serif;
    font-size: 15px;
    color: #222;
`;

const MenuBar = styled.header`
    ${flexCenter}
    justify-content: space-between;
    height: 32px;
    flex: none;
    padding: 0 32px 0 27px;
    background: linear-gradient(90deg, #1e2840, #1a2138 50%, #161b2c);
    color: #fff;
    font-size: 19px;
`;
const MenuGroup = styled.nav`
    ${flexCenter}
    gap: 25px;
`;
const AppleButton = styled.button`
    ${flexCenter}
`;
const MenuItem = styled.button`
    font-weight: ${(p) => (p.$bold ? 700 : 500)};
`;
const StatusGroup = styled.div`
    ${flexCenter}
    gap: 22px;
    time { margin-right: 7px; }
`;
const StatusSlot = styled.button`
    ${flexCenter}
    justify-content: center;
    width: 41px;
    margin-right: -22px;
`;
const InputSource = styled.button`
    ${flexCenter}
    gap: 8px;
    margin: 0 -8px 0 12px;
    font-size: 15px;
    b {
        width: 22px;
        line-height: 22px;
        border-radius: 3px;
        background: #fff;
        color: #171d33;
        font-size: 17px;
        font-weight: 500;
    }
`;
const Speaker = styled.svg`
    margin-right: 10px;
`;
const Siri = styled.svg`
    margin-right: -6px;
`;

const AppWindow = styled.main`
    position: relative;
    display: flex;
    flex-direction: column;
    flex: 1;
    min-height: 0;
    margin: 0 0 2px 2px;
    border-top: 1px solid #5c5f61;
    border-radius: 10px;
    overflow: hidden;
    background: #fff;
`;

const Tabs = styled.div`
    ${flexCenter}
    height: 52px;
    flex: none;
    background: #222;
    color: #7b7b7b;
`;
const TrafficLights = styled.div`
    ${flexCenter}
    gap: 10px;
    padding-left: 17px;
    width: 105px;
    button {
        width: 18px;
        height: 18px;
        border: 1px solid #5b5b5b;
        border-radius: 50%;
    }
`;
const HomeButton = styled.button`
    ${flexCenter}
    justify-content: center;
    width: 62px;
`;
const FileTab = styled.div`
    ${flexCenter}
    justify-content: space-between;
    width: 332px;
    height: 100%;
    padding: 0 14px 0 16px;
    background: #2c2c2c;
    color: #fff;
    font-weight: 500;
    button { color: #6a6a6a; }
`;
const NewTab = styled.button`
    ${flexCenter}
    padding: 0 14px;
`;
const Team = styled.span`
    ${flexCenter}
    height: 100%;
    margin-left: auto;
    padding: 0 22px;
    border-left: 1px solid #2e2e2e;
    font-weight: 500;
`;

const Tools = styled.div`
    display: grid;
    grid-template-columns: 1fr auto 1fr;
    height: 67px;
    flex: none;
    background: #2c2c2c;
    border-bottom: 1px solid #141414;
    color: #e5e5e5;
`;
const ToolGroup = styled.div`
    display: flex;
`;
const Tool = styled.button`
    ${flexCenter}
    justify-content: center;
    gap: 7px;
    width: ${(p) => p.$width}px;
    padding-left: ${(p) => (p.$menu ? 10 : 0)}px;
    background: ${(p) => (p.$active ? "#18a0fb" : "none")};
    color: ${(p) => (p.$active ? "#fff" : "inherit")};
`;
const FileTitle = styled.div`
    ${flexCenter}
    padding-right: 25px;
    font-size: 19px;
`;
const ProjectInitial = styled.span`
    width: 34px;
    line-height: 32px;
    border: 1px solid #616161;
    border-radius: 50%;
    background: #4e4e4e;
    color: #7d7d7d;
    text-align: center;
    font-size: 16px;
`;
const ProjectLink = styled.a`
    margin-left: 18px;
    color: #a6a6a6;
    text-decoration: none;
`;
const Slash = styled.span`
    margin: 0 11px;
    color: #7b7b7b;
`;
const FileName = styled.button`
    ${flexCenter}
    gap: 16px;
    color: #fff;
`;
const ShareGroup = styled.div`
    ${flexCenter}
    justify-content: flex-end;
    padding-right: 19px;
    gap: 24px;
`;
const IconButton = styled.button`
    ${flexCenter}
    & + & { margin-left: -2px; }
`;
const ShareButton = styled.button`
    width: 75px;
    height: 42px;
    border-radius: 8px;
    background: #18a0fb;
    color: #fff;
    font-weight: 600;
    margin-right: 9px;
`;
const ZoomButton = styled.button`
    ${flexCenter}
    gap: 8px;
    margin-left: 18px;
`;

const Workspace = styled.div`
    display: flex;
    flex: 1;
    min-height: 0;
`;
const SidePanel = styled.aside`
    width: 335px;
    flex: none;
    background: #fff;
    border: 0 solid #e5e5e5;
    border-width: ${(p) => (p.$side === "left" ? "0 1px 0 0" : "0 0 0 1px")};
`;
const PanelTabs = styled.div`
    ${flexCenter}
    gap: 22px;
    height: 58px;
    padding: 0 22px;
    border-bottom: 1px solid #e5e5e5;
`;
const PanelTab = styled.button`
    font-weight: ${(p) => (p.$active ? 600 : 400)};
    color: ${(p) => (p.$active ? "#222" : "#aaa")};
`;
const PagePicker = styled.button`
    ${flexCenter}
    gap: 7px;
    margin-left: auto;
    svg:last-child { color: #aaa; }
`;
const PagesHeader = styled.div`
    ${flexCenter}
    justify-content: space-between;
    height: 50px;
    padding: 6px 25px 0 22px;
    font-weight: 600;
`;
const PageList = styled.ul`
    display: flex;
    flex-direction: column;
    height: 580px;
    border-bottom: 1px solid #e5e5e5;
    li {
        display: flex;
        flex: 1;
    }
`;
const PageRow = styled.button`
    ${flexCenter}
    gap: 8px;
    width: 100%;
    padding-left: 27px;
`;
const Tick = styled.span`
    ${flexCenter}
    width: 20px;
    color: #000;
`;
const LayerList = styled.ul`
    display: flex;
    flex-direction: column;
    height: 625px;
    li {
        display: flex;
        flex: 1;
    }
`;
const LayerRow = styled.button`
    ${flexCenter}
    gap: 14px;
    padding-left: 25px;
    white-space: nowrap;
    font-weight: ${(p) => (p.$frame ? 600 : 400)};
    svg { color: ${(p) => (p.$frame ? "#222" : "#aaa")}; }
`;

const Section = styled.section`
    padding: 24px 22px;
    height: 113px;
    border-bottom: 1px solid #e5e5e5;
`;
const SectionTitle = styled.h2`
    font-weight: 600;
    line-height: 20px;
`;
const FillRow = styled.div`
    ${flexCenter}
    margin-top: 23px;
`;
const Swatch = styled.button`
    width: 22px;
    height: 22px;
    margin-right: 12px;
    border: 1px solid #dadada;
    background: #e5e5e5;
`;
const HexInput = styled.input`
    width: 80px;
    margin-right: 21px;
    & + & { margin-right: 0; }
`;
const EyeButton = styled.button`
    ${flexCenter}
    margin-left: auto;
`;
const ExportSection = styled(Section)`
    ${flexCenter}
    justify-content: space-between;
    height: 68px;
    padding-right: 24px;
    color: #b3b3b3;
`;

const CanvasGrid = styled.div`
    display: grid;
    grid-template-columns: 29px 1fr;
    grid-template-rows: 29px 1fr;
    flex: 1;
    min-width: 0;
`;
const Corner = styled.div`
    background: #fcfcfc;
    border: 0 solid #e5e5e5;
    border-width: 0 1px 1px 0;
`;
const RulerBar = styled.div`
    position: relative;
    overflow: hidden;
    background: #fcfcfc;
    color: #b0b0b0;
    font-size: 14px;
`;
// each mark is centred on its tick
const RulerMark = styled.span`
    position: absolute;
    ${(p) => (p.$vertical ? "right: 0; width: 6px; height: 1px;" : "bottom: 0; width: 1px; height: 6px;")}
    background: #aaa;
    span {
        position: absolute;
        bottom: ${(p) => (p.$vertical ? "-9px" : "9px")};
        left: ${(p) => (p.$vertical ? "-12px" : "0")};
        line-height: 18px;
        transform: translateX(-50%) ${(p) => (p.$vertical ? "rotate(-90deg)" : "")};
    }
`;
const Canvas = styled.section`
    position: relative;
    overflow: hidden;
    background: #e5e5e5;
`;
const FlowLines = styled.svg`
    position: absolute;
    left: 0;
    top: 0;
`;
const Node = styled.div`
    position: absolute;
    left: ${(p) => p.$x}px;
    top: ${(p) => p.$y}px;
    white-space: nowrap;
`;
const Headline = styled.p`
    font-size: 53px;
    font-weight: 500;
    line-height: 85px;
    color: #000;
    b {
        font: 400 56px/85px "Liberation Sans", sans-serif;
        -webkit-text-stroke: 1px #000;
    }
`;
const Note = styled.p`
    font-size: ${(p) => (p.$large ? 9 : 8)}px;
    line-height: ${(p) => (p.$tight ? 9 : 12)}px;
    font-weight: ${(p) => (p.$large || p.$tight ? 500 : 600)};
    color: #000;
`;
const Dots = styled.p`
    font: 700 36px/36px "Liberation Sans", sans-serif;
    color: #000;
`;
const Comment = styled.p`
    font-family: "Liberation Sans", sans-serif;
    font-size: 14px;
    line-height: 17px;
    color: ${(p) => (p.$orange ? "#ff9a62" : "#000")};
`;
const Ellipse = styled.div`
    width: 40px;
    height: 40px;
    border-radius: 50%;
    background: #ff9a62;
`;
const ScrollThumbY = styled.div`
    position: absolute;
    right: 7px;
    top: 433px;
    width: 8px;
    height: 432px;
    border-radius: 4px;
    background: #9b9b9b;
`;
const ScrollThumbX = styled.div`
    position: absolute;
    left: 0;
    bottom: 7px;
    width: 642px;
    height: 8px;
    border-radius: 0 4px 4px 0;
    background: #9b9b9b;
`;

const SpecCard = styled.article`
    width: 261px;
    height: 131px;
    padding: 10px 7px;
    background: #deecf7;
    font: 5px/1.5 Roboto, "Liberation Sans", sans-serif;
    color: #000;
    p { margin-top: 8px; }
    ul { padding-left: 7px; }
    li::before {
        content: "•";
        float: left;
        margin-left: -4px;
    }
`;

const FrameNode = styled.article`
    width: 261px;
    h3 {
        line-height: 24px;
        font-size: 15px;
        color: #8c8c8c;
    }
`;
const Screen = styled.div`
    display: flex;
    flex-direction: column;
    height: 163px;
    overflow: hidden;
    background: #f3f3f3;
    font: 2px/3px "Liberation Sans", sans-serif;
    color: #333;
    i {
        flex: none;
        width: 3px;
        height: 3px;
        border-radius: 50%;
        background: #2b7cb8;
    }
    em { color: #d02f3a; }
    u {
        color: #236a97;
        text-decoration: none;
    }
`;
const Chrome = styled.div`
    background: #202124;
    color: #d5d8dc;
`;
const ChromeRow = styled.div`
    ${flexCenter}
    gap: 3px;
    height: 5px;
    padding: 0 3px;
    background: ${(p) => (p.$dark ? "#191b1f" : "#2a2d33")};
    span { min-width: ${(p) => (p.$wide ? 31 : p.$dark ? 20 : 0)}px; }
`;
const SonarNav = styled.div`
    ${flexCenter}
    gap: 3px;
    height: 7px;
    margin-right: 2px;
    padding-left: 42px;
    background: #1f1f1f;
    color: #ccc;
    b { color: #fff; }
`;
const NavSearch = styled.span`
    width: 33px;
    height: 4px;
    margin-left: auto;
    padding-left: 3px;
    background: #fff;
    color: #555;
`;
const NavPlus = styled.span`
    width: 4px;
    height: 4px;
    margin: 0 43px 0 -2px;
    background: ${(p) => (p.$plain ? "#f5f5e6" : "#86d08f")};
`;
const ScreenBody = styled.div`
    display: flex;
    flex-direction: column;
    flex: 1;
    background: ${(p) => (p.$dim ? "#bbb" : "#f2f2f2")};
`;
const ScreenFooter = styled.footer`
    margin-top: auto;
    padding: 1px 0;
    border-top: 1px solid ${(p) => (p.$rule ? "rgba(0, 0, 0, 0.05)" : "transparent")};
    text-align: center;
`;
const Warning = styled.div`
    ${flexCenter}
    gap: 3px;
    width: 146px;
    height: 8px;
    margin: 0 auto 1px;
    padding-left: 2px;
    background: ${(p) => (p.$dim ? "#c6bc9b" : "#fbf6da")};
    color: #6e5a2a;
    text-align: left;
    i { background: #e58a2e; width: 2px; height: 2px; }
`;
const CreateBody = styled.div`
    display: flex;
    flex-direction: column;
    align-items: center;
    padding-top: 19px;
    b {
        font: 700 4px/4px "Liberation Sans", sans-serif;
        color: #222;
    }
    p {
        margin-top: 4px;
        line-height: 4px;
        text-align: center;
    }
`;
const Providers = styled.ul`
    display: flex;
    justify-content: space-between;
    width: 145px;
    margin-top: 14px;
    li {
        display: flex;
        flex-direction: column;
        align-items: center;
        justify-content: center;
        gap: 3px;
        width: 27px;
        height: 27px;
        background: #fff;
    }
`;
const InfoStrip = styled.div`
    ${flexCenter}
    gap: 3px;
    width: 116px;
    height: 10px;
    margin: 3px 0 0 29px;
    padding: 0 2px;
    background: #d9edf7;
    color: #236a97;
    white-space: normal;
`;
const FormBody = styled.div`
    display: flex;
    flex-direction: column;
    align-items: flex-start;
    flex: 1;
    padding: 2px 45px 0 42px;
`;
const FormTitle = styled.b`
    ${flexCenter}
    gap: 1px;
    align-self: stretch;
    height: 6px;
    margin-bottom: 5px;
    border-bottom: 1px solid #e6e6e6;
    font-size: 3px;
    font-weight: ${(p) => (p.$plain ? 400 : 700)};
`;
const Field = styled.span`
    display: block;
    width: ${(p) => (p.$large ? 68 : 41)}px;
    height: ${(p) => (p.$large ? 6 : 4)}px;
    margin-bottom: ${(p) => (p.$large ? 4 : 2)}px;
    padding-left: 2px;
    border: 1px solid ${(p) => (p.$focus ? "#a9d3ee" : p.$error ? "#e58b93" : "#ededed")};
    background: #fff;
    line-height: ${(p) => (p.$large ? 4 : 2)}px;
`;
const MiniButton = styled.span`
    display: inline-block;
    min-width: 8px;
    padding: 0 1px;
    background: ${(p) => (p.$blue ? "#dfeaf3" : "#e2e2e2")};
    color: ${(p) => (p.$blue ? "#236a97" : "#999")};
`;
const Modal = styled.div`
    width: 197px;
    height: 88px;
    margin: 18px 32px;
    padding: 6px 9px;
    background: #fff;
    color: #333;
    font-size: 3px;
    line-height: 4px;
    ${FormTitle} { font-size: 4px; height: 9px; margin-bottom: 4px; }
`;
const ModalColumns = styled.div`
    display: flex;
    justify-content: space-between;
    align-items: flex-start;
    height: 52px;
    padding-right: 7px;
`;
const ModalForm = styled.div`
    display: flex;
    flex-direction: column;
`;
const ModalInfo = styled.div`
    ${flexCenter}
    gap: 5px;
    width: 82px;
    height: 15px;
    padding: 0 3px;
    background: #d9edf7;
    color: #236a97;
    white-space: normal;
`;
const ModalActions = styled.div`
    ${flexCenter}
    justify-content: center;
    gap: 2px;
    width: 47px;
    height: 14px;
    margin-left: auto;
    background: #f4f4f4;
    span {
        padding: 1px;
        background: #e8e8e8;
        color: #a6a6a6;
    }
`;
const TokenColumns = styled.div`
    display: flex;
    justify-content: space-between;
    align-self: stretch;
    p { margin-bottom: 1px; }
`;
const TokenError = styled.div`
    ${flexCenter}
    gap: 3px;
    color: #d8505c;
`;
const TokenHelp = styled.div`
    width: 87px;
    height: 27px;
    padding: 2px 4px 0 6px;
    background: #d9edf7;
    color: #236a97;
    white-space: normal;
    b { color: #333; }
`;
const Prompt = styled.div`
    display: flex;
    margin: auto 0 9px 110px;
    background: #1fce4f;
    color: #0b5421;
    span { padding: 0 3px; }
    span + span {
        background: #f7353a;
        color: #fff;
    }
`;
const ReposBody = styled(FormBody)`
    padding: 2px 38px 0 37px;
`;
const RepoPanel = styled.div`
    align-self: stretch;
    height: 100px;
    padding: 3px 2px 0;
    background: #fff;
    table {
        width: 100%;
        margin-top: 7px;
        border-collapse: collapse;
    }
    tr:nth-child(even) { background: #f3f3f3; }
    td {
        height: 8px;
        padding: 0 1px;
        line-height: 2px;
    }
    td:first-child { width: 37%; }
    td:last-child { text-align: right; }
    p { text-align: center; }
`;

const BottomShade = styled.div`
    position: absolute;
    left: 0;
    right: 0;
    bottom: 0;
    height: 64px;
    pointer-events: none;
    background: linear-gradient(transparent, rgba(0, 0, 0, 0.07));
`;
const HelpButton = styled.button`
    position: absolute;
    right: 32px;
    bottom: 33px;
    width: 50px;
    height: 50px;
    border-radius: 50%;
    background: #2a2a2a;
    color: #fff;
    font-size: 24px;
    font-weight: 300;
    box-shadow: 0 0 4px rgba(0, 0, 0, 0.2);
`;

const Dock = styled.footer`
    display: flex;
    flex: none;
    height: 91px;
    margin: 0 61px 0 60px;
    padding: 0 4px;
    border: 1px solid #3a404d;
    border-bottom: 0;
    border-radius: 7px 7px 0 0;
    background: linear-gradient(#151b27, #191f2e);
`;
const DockItem = styled.button`
    position: relative;
    display: flex;
    flex: 1;
    flex-direction: column;
    align-items: center;
    padding-top: 11px;
`;
const DockDivider = styled.span`
    width: 1px;
    height: 66px;
    margin: 12px 16px 0;
    background: #565c69;
`;
const Badge = styled.span`
    position: absolute;
    top: 7px;
    right: 0;
    width: 27px;
    line-height: 27px;
    border-radius: 50%;
    background: #e14b3f;
    color: #fff;
    font-size: 16px;
    text-align: center;
`;
const RunningDot = styled.span`
    width: 5px;
    height: 5px;
    margin-top: 11px;
    border-radius: 50%;
    background: #a9adb8;
`;

export default App;
